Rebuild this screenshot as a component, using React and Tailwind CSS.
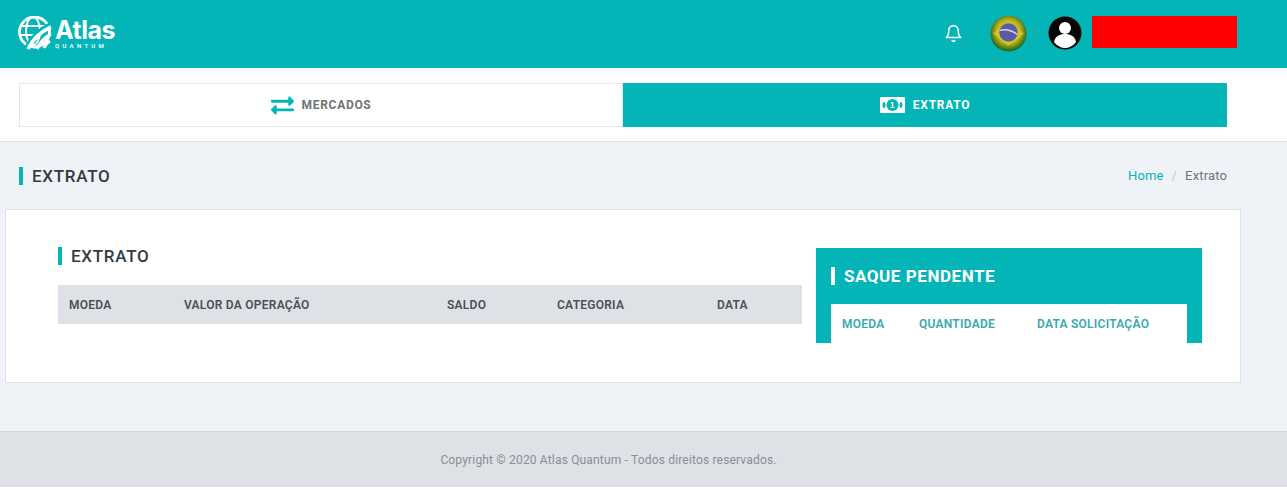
import { FaExchangeAlt } from "react-icons/fa";
import { FiBell } from "react-icons/fi";

function Logo() {
  return (
    <div className="flex items-center gap-[3px]">
      <svg width="34" height="35" viewBox="0 0 34 35" fill="none" stroke="white">
        <circle cx="16.500" cy="16" r="15" strokeWidth="2.800" />
        <ellipse cx="15" cy="15" rx="7" ry="14" strokeWidth="2" />
        <path d="M3 10h24M2 19h15" strokeWidth="2" />
        <path d="M33 8C23 13 13 22 8 33" strokeWidth="4.500" stroke="#04b5b8" />
        <path d="M33 11C24 15 15 23 10 33" strokeWidth="3.600" />
        <path d="M33 18c-6 3-11 9-14 15" strokeWidth="3.200" />
        <path d="M32 25c-3 2-5 4-6 7" strokeWidth="2.800" />
      </svg>
      <div className="flex flex-col items-start">
        <span className="text-[25px] leading-[24px] font-bold text-white font-['Inter',sans-serif] tracking-[-0.5px]">
          Atlas
        </span>
        <span className="text-[6px] leading-[7px] font-semibold text-white tracking-[3.3px]">
          QUANTUM
        </span>
      </div>
    </div>
  );
}

function Flag() {
  return (
    <svg width="37" height="37" viewBox="0 0 36 36">
      <defs>
        <radialGradient id="flagBg" cx="50%" cy="45%" r="55%">
          <stop offset="0%" stopColor="#f0d91f" />
          <stop offset="60%" stopColor="#b9b322" />
          <stop offset="100%" stopColor="#145f1a" />
        </radialGradient>
      </defs>
      <circle cx="18" cy="18" r="17.500" fill="url(#flagBg)" />
      <path d="M18 6 33 18 18 30 3 18Z" fill="#e2cd1d" opacity="0.75" />
      <circle cx="18" cy="17" r="9" fill="#5a5ba8" />
      <path d="M9.500 15c6-1.500 12 0 17 4" stroke="#d8d8e8" strokeWidth="1.400" fill="none" />
    </svg>
  );
}

function Avatar() {
  return (
    <svg width="34" height="34" viewBox="0 0 34 34">
      <circle cx="17" cy="17" r="16.500" fill="#050505" />
      <circle cx="17" cy="12" r="6" fill="white" />
      <path d="M6 26c1-6 6-8 11-8s10 2 11 8c-3 4-7 6-11 6s-8-2-11-6Z" fill="white" />
    </svg>
  );
}

function BillIcon() {
  return (
    <svg width="25" height="16" viewBox="0 0 25 16">
      <rect width="25" height="16" rx="1" fill="white" />
      <ellipse cx="4" cy="8" rx="1.500" ry="3" fill="#04b5b8" />
      <ellipse cx="21" cy="8" rx="1.500" ry="3" fill="#04b5b8" />
      <circle cx="12.500" cy="8" r="6" fill="#04b5b8" />
      <path d="M11 5h2.200v5h1.200v1h-3.800v-1h1.200V6.200H11Z" fill="white" />
    </svg>
  );
}

function Heading({ children }) {
  return (
    <h2 className="border-l-4 border-[#04b5b8] pl-[9px] text-[17px] leading-[18px] font-medium text-[#343a40] tracking-[0.7px]">
      {children}
    </h2>
  );
}

export default function App() {
  return (
    <div className="min-h-[490px] bg-[#eff3f7] font-['Roboto',sans-serif]">
      <header className="h-[68px] bg-[#04b5b8] flex items-center pl-[18px] pr-[50px] pb-[2px]">
        <Logo />
        <div className="ml-auto flex items-center">
          <FiBell className="text-white text-[19px] mr-[27px]" />
          <Flag />
          <div className="ml-[21px] mr-[10px]">
            <Avatar />
          </div>
          <div className="w-[145px] h-[32px] mb-[2px] bg-[#ff0000]" />
        </div>
      </header>

      <div className="bg-white border-b border-[#dfe1e4] pt-[15px] pb-[14px] pl-[19px] pr-[60px]">
        <div className="flex h-[44px]">
          <div className="w-1/2 flex items-center justify-center gap-[8px] border border-[#e4e6e9] text-[#6f7478] text-[12px] font-bold tracking-[0.7px]">
            <FaExchangeAlt className="text-[#04b5b8] text-[23px]" />
            MERCADOS
          </div>
          <div className="w-1/2 flex items-center justify-center gap-[8px] bg-[#04b5b8] text-white text-[12px] font-bold tracking-[0.7px]">
            <BillIcon />
            EXTRATO
          </div>
        </div>
      </div>

      <div className="flex items-center justify-between pl-[19px] pr-[60px] pt-[25px] pb-[24px]">
        <Heading>EXTRATO</Heading>
        <div className="text-[13px] leading-[18px] tracking-[0.15px] flex gap-[8px]">
          <span className="text-[#04b5b8]">Home</span>
          <span className="text-[#c3c7cb]">/</span>
          <span className="text-[#6c757d]">Extrato</span>
        </div>
      </div>

      <section className="ml-[5px] w-[1236px] h-[174px] bg-white border border-[#dcdfee] flex pl-[52px] pt-[37px]">
        <div className="w-[744px]">
          <Heading>EXTRATO</Heading>
          <div className="mt-[20px] h-[39px] bg-[#dee2e6] flex items-center text-[12px] font-semibold tracking-[0.25px] text-[#495057]">
            <span className="w-[126px] pl-[11px]">MOEDA</span>
            <span className="w-[263px]">VALOR DA OPERAÇÃO</span>
            <span className="w-[110px]">SALDO</span>
            <span className="w-[160px]">CATEGORIA</span>
            <span>DATA</span>
          </div>
        </div>
        <div className="ml-[14px] mt-[1px] w-[386px] h-[95px] bg-[#04b5b8] px-[15px] flex flex-col">
          <div className="h-[56px] flex items-center pb-[1px]">
            <h2 className="border-l-4 border-white pl-[9px] text-[17px] leading-[18px] font-bold text-white tracking-[0.55px]">
              SAQUE PENDENTE
            </h2>
          </div>
          <div className="flex-1 bg-white flex items-center text-[12px] font-semibold tracking-[0.25px] text-[#3aa9ab]">
            <span className="w-[88px] pl-[11px]">MOEDA</span>
            <span className="w-[118px]">QUANTIDADE</span>
            <span>DATA SOLICITAÇÃO</span>
          </div>
        </div>
      </section>

      <footer className="mt-[48px] h-[56px] bg-[#dee2e6] border-t border-[#d3d7db] flex items-center justify-center pr-[70px] text-[12px] text-[#868e96] tracking-[0.17px]">
        Copyright © 2020 Atlas Quantum - Todos direitos reservados.
      </footer>
      <div className="h-[3px] bg-white" />
    </div>
  );
}
